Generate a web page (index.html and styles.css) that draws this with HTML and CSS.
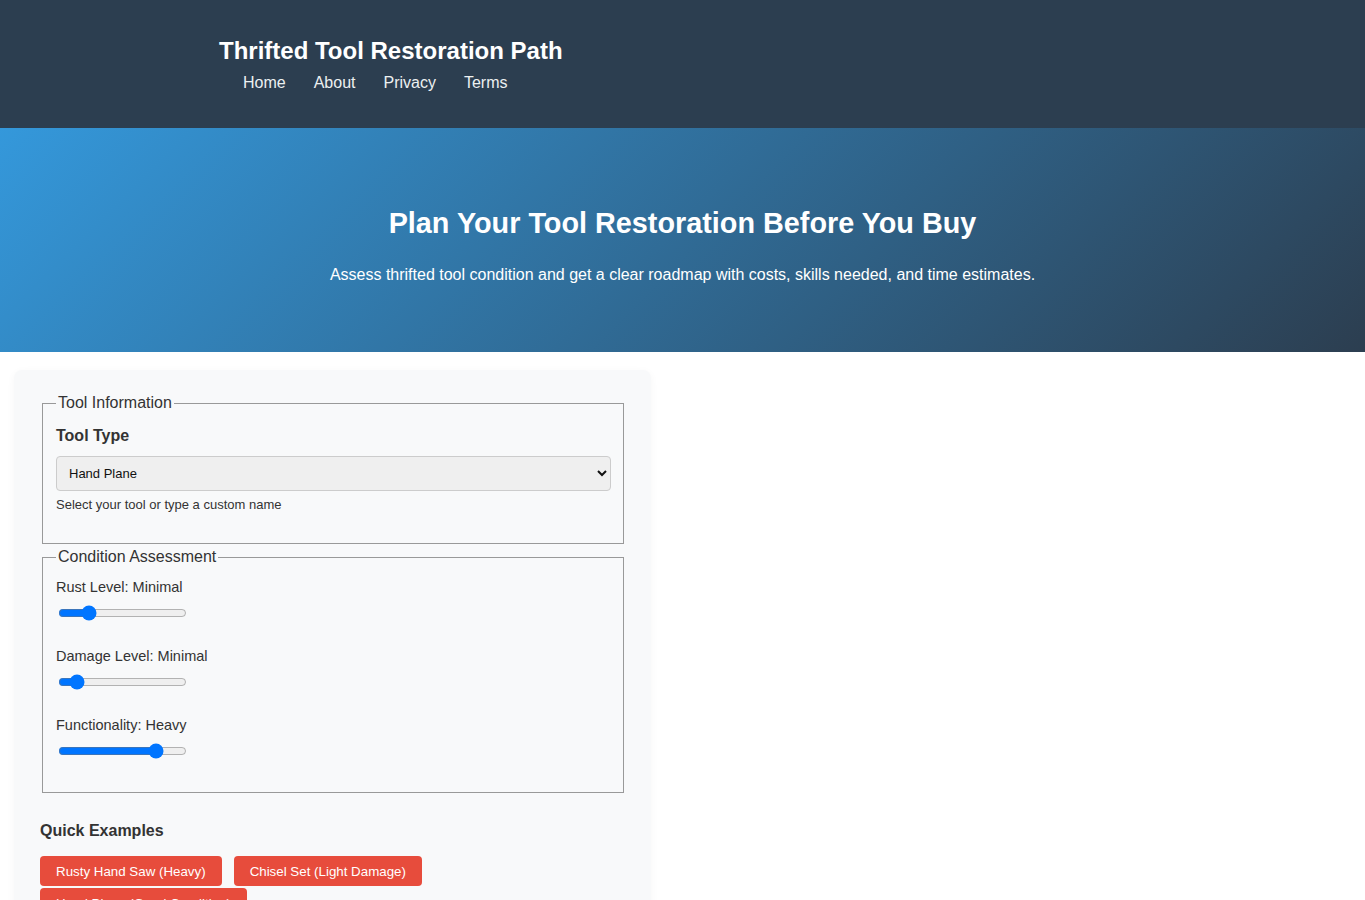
FILE: index.html
```html
<!DOCTYPE html>
<html lang="en">
  <head>
    <meta charset="UTF-8" />
    <meta name="viewport" content="width=device-width, initial-scale=1.0" />
    <title>Thrifted Tool Restoration Path</title>
    <link rel="stylesheet" href="styles.css">
  </head>

  <body>
    <!-- Site header -->
    <header class="site-header">
      <div class="header-inner">
        <h1 class="site-title">Thrifted Tool Restoration Path</h1>
        <nav class="site-nav">
          <a href="#">Home</a>
          <a href="#">About</a>
          <a href="#">Privacy</a>
          <a href="#">Terms</a>
        </nav>
      </div>
    </header>

    <!-- Hero -->
    <section class="hero">
      <h2>Plan Your Tool Restoration Before You Buy</h2>
      <p>
        Assess thrifted tool condition and get a clear roadmap with costs,
        skills needed, and time estimates.
      </p>
    </section>

    <main class="main-grid">
      <div class="tool-card">
        <fieldset>
          <legend>Tool Information</legend>
          <div class="form-group">
            <label for="tool-type" class="field-title">Tool Type</label>
            <select id="tool-type">
              <option>Hand Saw</option>
              <option selected>Hand Plane</option>
              <option>Chisel Set</option>
              <option>Other</option>
            </select>
            <small class="hint">Select your tool or type a custom name</small>
          </div>
        </fieldset>

        <fieldset class="condition">
          <legend>Condition Assessment</legend>
          <div class="range-group">
            <label for="rust">Rust Level: <span id="rust-val">Minimal</span></label>
            <input type="range" id="rust" min="0" max="10" value="2" />
          </div>
          <div class="range-group">
            <label for="damage">Damage Level: <span id="damage-val">Minimal</span></label>
            <input type="range" id="damage" min="0" max="10" value="1" />
          </div>
          <div class="range-group">
            <label for="func">Functionality: <span id="func-val">Heavy</span></label>
            <input type="range" id="func" min="0" max="10" value="8" />
          </div>
        </fieldset>

        <h3 class="examples-title">Quick Examples</h3>
        <div class="examples">
          <button class="example-btn">Rusty Hand Saw (Heavy)</button>
          <button class="example-btn">Chisel Set (Light Damage)</button>
          <button class="example-btn">Hand Plane (Good Condition)</button>
        </div>
      </div>

      <div class="results"></div>
    </main>
  </body>
</html>
```

FILE: styles.css
```css
body {
  font-family: "Liberation Sans", Arial, sans-serif;
  margin: 0;
  padding: 0;
  color: #333;
  background: #fff;
}

/* Header */
.site-header {
  background: #2c3e50;
  color: white;
  height: 128px;
  box-sizing: border-box;
  padding-top: 36px;
}

.header-inner {
  margin-left: 219px;
}

.site-title {
  margin: 0;
  font-size: 24px;
  font-weight: bold;
  line-height: 30px;
}

.site-nav {
  display: flex;
  gap: 28px;
  padding-left: 24px;
  margin-top: 6px;
}

.site-nav a {
  color: #ecf0f1;
  text-decoration: none;
  font-size: 16px;
  line-height: 22px;
}

/* Hero */
.hero {
  background: linear-gradient(135deg, #3498db 0%, #2c3e50 100%);
  color: white;
  text-align: center;
  height: 224px;
  box-sizing: border-box;
  padding-top: 77px;
}

.hero h2 {
  margin: 0;
  font-size: 28.8px;
  line-height: 36px;
}

.hero p {
  margin: 23px 0 0 0;
  font-size: 16px;
  line-height: 22px;
}

/* Main layout */
.main-grid {
  display: grid;
  grid-template-columns: 637px 1fr;
  gap: 32px;
  padding: 18px 14px;
}

.tool-card {
  background: #f8f9fa;
  border-radius: 8px;
  box-shadow: 0 2px 8px rgba(0, 0, 0, 0.04);
  padding: 24px 25px 20px 26px;
}

fieldset {
  border: 1px solid #999;
  margin: 0 2px 4px 2px;
  padding: 4px 12px 10px 13px;
}

legend {
  font-size: 16px;
  color: #333;
  padding: 0 2px;
}

.form-group {
  display: flex;
  flex-direction: column;
  padding-bottom: 21px;
}

.field-title {
  font-weight: bold;
  font-size: 16px;
  margin: 11px 0 11px 0;
}

select {
  height: 35px;
  font-family: "Liberation Sans", Arial, sans-serif;
  font-size: 13px;
  padding: 0 8px;
  border: 1px solid #ccc;
  border-radius: 4px;
  background: #efefef;
  color: #111;
}

.hint {
  font-size: 13px;
  margin-top: 6px;
  color: #333;
}

/* Condition sliders */
.condition {
  padding-bottom: 15px;
}

.range-group {
  display: flex;
  flex-direction: column;
  align-items: flex-start;
  margin-bottom: 18px;
}

.range-group label {
  font-size: 14.5px;
  line-height: 18px;
  margin-top: 8px;
  margin-bottom: 7px;
}

.range-group input {
  margin: 2px 2px 0 2px;
}

/* Quick examples */
.examples-title {
  font-size: 16px;
  margin: 29px 0 16px 0;
}

.examples {
  display: flex;
  flex-wrap: wrap;
  column-gap: 12px;
  row-gap: 2px;
}

.example-btn {
  background-color: #e74c3c;
  color: white;
  border: none;
  border-radius: 4px;
  padding: 0 16px;
  height: 30px;
  font-family: "Liberation Sans", Arial, sans-serif;
  font-size: 13.333px;
  cursor: pointer;
}

.example-btn:hover {
  background-color: #c0392b;
}
```
